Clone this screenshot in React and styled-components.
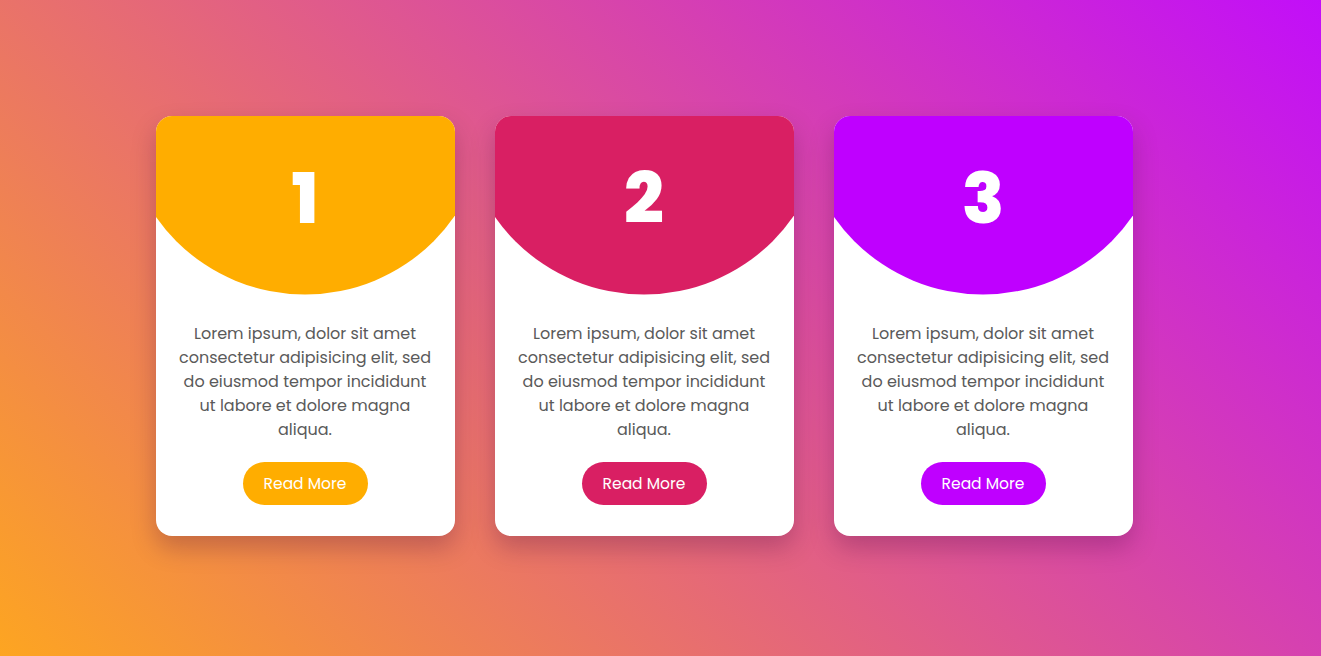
import React from 'react'
import styled, { createGlobalStyle } from 'styled-components'

const GlobalStyle = createGlobalStyle`
  html, body {
    margin: 0;
    padding: 0;
  }
  body {
    font-family: "Poppins", "Inter", "Open Sans", sans-serif;
    background: linear-gradient(45deg, #fda521, #c20ef9);
    min-height: 100vh;
  }
`

const Page = styled.main`
  width: 100%;
  height: 656px;
  box-sizing: border-box;
  padding-right: 33px;
  display: flex;
  justify-content: center;
  align-items: center;
  gap: 40px;
`

const Card = styled.div`
  width: 299px;
  height: 420px;
  margin-top: -5px;
  background: #fff;
  border-radius: 16px;
  overflow: hidden;
  box-shadow: 0 12px 24px rgba(60, 0, 60, 0.25);
  display: flex;
  flex-direction: column;
  align-items: center;
`

const Head = styled.div`
  width: 100%;
  height: 180px;
  flex-shrink: 0;
  background: ${p => p.$color};
  clip-path: circle(182px at 50% -3px);
  display: flex;
  justify-content: center;
  padding-top: 41px;
  box-sizing: border-box;
`

const Number = styled.span`
  color: #fff;
  font-family: "Poppins", "Inter", sans-serif;
  font-weight: 800;
  font-size: 70px;
  line-height: 84px;
`

const Text = styled.p`
  margin: 26px 0 0;
  padding: 0 22px;
  text-align: center;
  color: #5a5a5a;
  font-size: 16px;
  line-height: 24px;
`

const Button = styled.button`
  margin-top: 20px;
  width: 125px;
  height: 43px;
  border: none;
  border-radius: 22px;
  background: ${p => p.$color};
  color: #fff;
  font-family: "Poppins", "Inter", sans-serif;
  font-size: 15.5px;
  font-weight: 400;
  cursor: pointer;
`

const cards = [
  { n: 1, color: '#ffad00' },
  { n: 2, color: '#d91f63' },
  { n: 3, color: '#bf00ff' },
]

const text = 'Lorem ipsum, dolor sit amet consectetur adipisicing elit, sed do eiusmod tempor incididunt ut labore et dolore magna aliqua.'

export default function App() {
  return (
    <>
      <GlobalStyle />
      <Page>
        {cards.map(c => (
          <Card key={c.n}>
            <Head $color={c.color}>
              <Number>{c.n}</Number>
            </Head>
            <Text>{text}</Text>
            <Button $color={c.color}>Read More</Button>
          </Card>
        ))}
      </Page>
    </>
  )
}
